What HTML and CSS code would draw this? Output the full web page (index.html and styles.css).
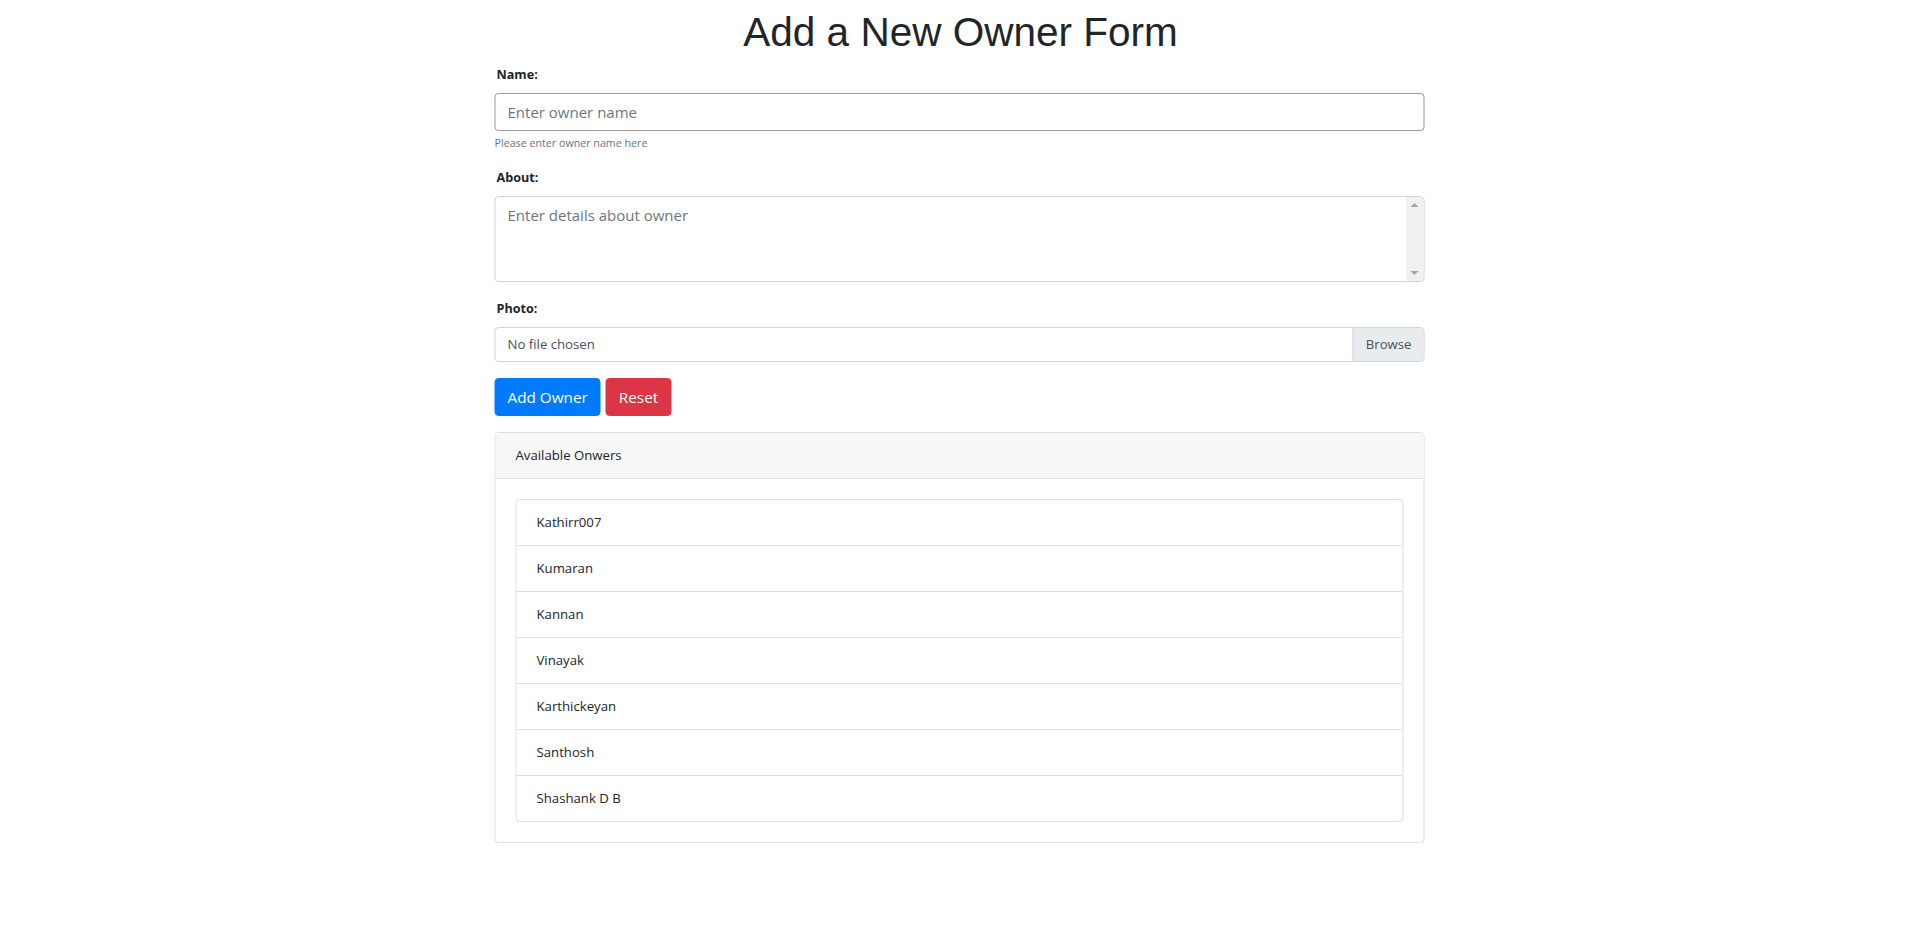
FILE: index.html
```html
<!DOCTYPE html>
<html lang="en">
<head>
<meta charset="utf-8">
<title>Add a New Owner Form</title>
<link rel="stylesheet" href="styles.css">
</head>
<body>
<div class="page">
  <h1 class="title">Add a New Owner Form</h1>
  <form class="owner-form">
    <div class="form-group">
      <label class="field-label" for="name">Name:</label>
      <input class="form-control name-input" id="name" type="text" placeholder="Enter owner name">
      <small class="help">Please enter owner name here</small>
    </div>
    <div class="form-group">
      <label class="field-label" for="about">About:</label>
      <div class="textarea-wrap">
        <textarea class="form-control about-input" id="about" rows="3" placeholder="Enter details about owner"></textarea>
        <span class="scroll-track">
          <span class="arrow arrow-up"></span>
          <span class="arrow arrow-down"></span>
        </span>
      </div>
    </div>
    <div class="form-group">
      <label class="field-label" for="photo">Photo:</label>
      <div class="custom-file">
        <span class="file-name">No file chosen</span>
        <span class="file-browse">Browse</span>
      </div>
    </div>
    <div class="actions">
      <button type="button" class="btn btn-primary">Add Owner</button>
      <button type="reset" class="btn btn-danger">Reset</button>
    </div>
  </form>
  <div class="card">
    <div class="card-header">Available Onwers</div>
    <div class="card-body">
      <ul class="list-group">
        <li class="list-item">Kathirr007</li>
        <li class="list-item">Kumaran</li>
        <li class="list-item">Kannan</li>
        <li class="list-item">Vinayak</li>
        <li class="list-item">Karthickeyan</li>
        <li class="list-item">Santhosh</li>
        <li class="list-item">Shashank D B</li>
      </ul>
    </div>
  </div>
</div>
</body>
</html>
```
FILE: styles.css
```css
* { box-sizing: border-box; }
html, body { margin: 0; padding: 0; background: #fff; }
body {
  font-family: "Open Sans", "Noto Sans", sans-serif;
  font-size: 13.2px;
  line-height: 21px;
  color: #212529;
}
.page {
  width: 930px;
  margin: 0 auto;
  padding-top: 8px;
  transform: translateX(-0.5px);
}
.title {
  font-family: "Liberation Sans", Arial, sans-serif;
  font-weight: 400;
  font-size: 40.5px;
  line-height: 48px;
  text-align: center;
  margin: 0 0 8px 0;
  padding-left: 2px;
}
.owner-form { margin: 0; }
.form-group { margin-bottom: 16px; }
.field-label {
  display: block;
  font-weight: 700;
  font-size: 12.6px;
  line-height: 21px;
  margin-bottom: 8px;
  padding-left: 2px;
}
.form-control {
  display: block;
  width: 100%;
  font-family: "Open Sans", "Noto Sans", sans-serif;
  font-size: 15px;
  line-height: 24px;
  color: #495057;
  background: #fff;
  border: 1px solid #ced4da;
  border-radius: 4px;
  padding: 6px 12px;
  margin: 0;
  outline: none;
}
.form-control::placeholder { color: #6c757d; opacity: 1; }
.name-input { height: 38px; border-color: #9a9a9a; }
.help {
  display: block;
  margin-top: 4px;
  font-size: 10.7px;
  line-height: 16px;
  color: #6c757d;
}
.textarea-wrap { position: relative; }
.about-input {
  height: 86px;
  resize: none;
  overflow: hidden;
  padding-right: 30px;
}
.scroll-track {
  position: absolute;
  top: 1px;
  right: 1px;
  bottom: 1px;
  width: 17px;
  background: #f0f0f0;
  border-radius: 0 3px 3px 0;
}
.arrow {
  position: absolute;
  left: 4px;
  width: 0;
  height: 0;
  border-left: 4px solid transparent;
  border-right: 4px solid transparent;
}
.arrow-up { top: 6px; border-bottom: 4px solid #a3a3a3; }
.arrow-down { bottom: 6px; border-top: 4px solid #a3a3a3; }
.custom-file {
  display: flex;
  height: 35px;
  border: 1px solid #ced4da;
  border-radius: 4px;
  overflow: hidden;
  font-size: 13.2px;
  color: #495057;
}
.file-name {
  flex: 1;
  padding: 6px 12px;
  line-height: 21px;
}
.file-browse {
  padding: 6px 12px;
  line-height: 21px;
  background: #e9ecef;
  border-left: 1px solid #ced4da;
}
.actions {
  display: flex;
  gap: 5px;
  margin-bottom: 16px;
}
.btn {
  font-family: "Open Sans", "Noto Sans", sans-serif;
  font-size: 15.3px;
  line-height: 24px;
  padding: 6px 12px;
  border: 1px solid transparent;
  border-radius: 4px;
  color: #fff;
  cursor: pointer;
}
.btn-primary { background: #007bff; border-color: #007bff; }
.btn-danger { background: #dc3545; border-color: #dc3545; }
.card {
  border: 1px solid #dfdfdf;
  border-radius: 4px;
  margin-top: 16px;
}
.card-header {
  padding: 12px 20px;
  line-height: 21px;
  background: #f7f7f7;
  border-bottom: 1px solid #dfdfdf;
}
.card-body { padding: 20px; }
.list-group {
  list-style: none;
  margin: 0;
  padding: 0;
  border: 1px solid #dfdfdf;
  border-radius: 4px;
}
.list-item {
  padding: 12px 20px;
  line-height: 21px;
  border-top: 1px solid #dfdfdf;
}
.list-item:first-child { border-top: none; }
```
